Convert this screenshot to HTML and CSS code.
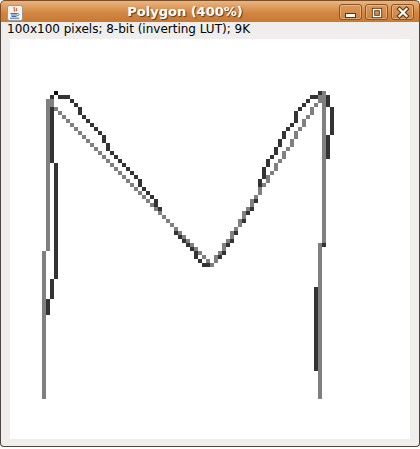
FILE: index.html
```html
<!DOCTYPE html>
<html>
<head>
<meta charset="utf-8">
<title>Polygon (400%)</title>
<link rel="stylesheet" href="styles.css">
</head>
<body>
<div class="window">
  <div class="titlebar">
    <div class="app-icon">
      <svg width="16" height="16" viewBox="0 0 16 16">
        <rect x="0.5" y="0.5" width="15" height="15" rx="2" fill="#f4f2ef" stroke="#a0968a"/>
        <path d="M7.5 2 C5.5 3.8 9 4.6 7 6.6 M9.6 3.2 C8.6 4.2 10.2 4.8 9.2 6" stroke="#e0561c" stroke-width="1.1" fill="none"/>
        <path d="M3.5 8.5 H10.5 M4 10 H10 M4.5 11.5 H9.5 M3 13.2 H12" stroke="#3f6fae" stroke-width="1"/>
        <path d="M10.5 8.6 C12.6 8.6 12.6 10.6 10.2 10.6" stroke="#3f6fae" stroke-width="0.9" fill="none"/>
      </svg>
    </div>
    <div class="title">Polygon (400%)</div>
    <div class="buttons">
      <div class="btn">
        <svg width="21" height="14" viewBox="0 0 21 14">
          <rect x="5.5" y="8.5" width="10" height="4" fill="#fff" stroke="#5a3413"/>
        </svg>
      </div>
      <div class="btn">
        <svg width="21" height="14" viewBox="0 0 21 14">
          <rect x="7.5" y="4.5" width="7" height="7" fill="none" stroke="#5a3413" stroke-width="3.2"/>
          <rect x="7.5" y="4.5" width="7" height="7" fill="none" stroke="#fff" stroke-width="1.4"/>
        </svg>
      </div>
      <div class="btn">
        <svg width="21" height="14" viewBox="0 0 21 14">
          <path d="M7.5 4 L14.5 11 M14.5 4 L7.5 11" stroke="#5a3413" stroke-width="4.2" stroke-linecap="square"/>
          <path d="M7.5 4 L14.5 11 M14.5 4 L7.5 11" stroke="#fff" stroke-width="2.2" stroke-linecap="square"/>
        </svg>
      </div>
    </div>
  </div>
  <div class="content">
    <div class="info">100x100 pixels; 8-bit (inverting LUT); 9K</div>
    <canvas id="img" class="image" width="400" height="400"></canvas>
  </div>
</div>
<script src="script.js"></script>
</body>
</html>
```

FILE: styles.css
```css
html, body {
  margin: 0;
  padding: 0;
  background: #ffffff;
}

.window {
  width: 420px;
  height: 447px;
  box-sizing: border-box;
  display: flex;
  flex-direction: column;
}

.titlebar {
  height: 22px;
  box-sizing: border-box;
  display: flex;
  align-items: flex-start;
  border: 1px solid #7c4e24;
  border-bottom: none;
  border-radius: 5px 5px 0 0;
  background: linear-gradient(to bottom, #e9b584 0%, #dc9757 35%, #d0853f 60%, #c77a36 100%);
  padding: 0 5px 0 6px;
}

.app-icon {
  width: 16px;
  height: 16px;
  margin-top: 4px;
}

.app-icon svg {
  display: block;
}

.title {
  flex: 1;
  text-align: center;
  font-family: "DejaVu Sans", sans-serif;
  font-weight: bold;
  font-size: 13px;
  line-height: 21px;
  color: #ffffff;
  text-shadow: 1px 1px 1px #5e3a16;
  padding-left: 8px;
  white-space: nowrap;
}

.buttons {
  display: flex;
  gap: 3px;
  margin-top: 3px;
}

.btn {
  width: 23px;
  height: 16px;
  box-sizing: border-box;
  border: 1px solid #8a5527;
  border-radius: 3px;
  background: linear-gradient(to bottom, #dc9a5c, #cc813e);
  box-shadow: inset 0 0 0 1px rgba(255, 214, 170, 0.45);
}

.btn svg {
  display: block;
}

.content {
  flex: 1;
  box-sizing: border-box;
  background: #efeeec;
  border: 1px solid #4d463f;
  border-top: none;
  border-radius: 0 0 4px 4px;
  padding: 0 0 7px 0;
}

.info {
  height: 17px;
  padding-left: 6px;
  font-family: "DejaVu Sans", sans-serif;
  font-size: 12px;
  line-height: 14px;
  color: #000000;
  white-space: nowrap;
}

.image {
  display: block;
  margin: 0 9px;
  width: 400px;
  height: 400px;
  background: #ffffff;
}
```

FILE: script.js
```js
(function () {
  var c = document.getElementById('img');
  var ctx = c.getContext('2d');
  var GRAY = '#808080';
  var DARK = '#333333';
  var BLACK = '#0e0e0e';

  ctx.fillStyle = '#ffffff';
  ctx.fillRect(0, 0, 400, 400);

  function px(i, j, col) {
    ctx.fillStyle = col;
    ctx.fillRect(i * 4, j * 4, 4, 4);
  }
  function vrun(i, j0, j1, col) {
    for (var j = j0; j <= j1; j++) px(i, j, col);
  }
  function line(x0, y0, x1, y1, col) {
    var dx = x1 - x0, dy = y1 - y0;
    var n = Math.max(Math.abs(dx), Math.abs(dy));
    for (var k = 0; k <= n; k++) {
      px(Math.round(x0 + dx * k / n), Math.round(y0 + dy * k / n), col);
    }
  }

  /* dark hand-drawn trace */
  vrun(10, 17, 30, DARK);
  vrun(11, 31, 59, DARK);
  vrun(10, 60, 64, DARK);
  vrun(9, 65, 68, DARK);

  var left = [
    [10,14],[12,14],[13,14],[14,14],[15,15],[16,16],[17,17],[17,18],[18,19],
    [19,20],[20,21],[21,22],[22,23],[23,24],[23,25],[24,26],[24,27],[25,28],
    [26,29],[27,30],[28,31],[29,32],[30,33],[31,34],[32,35],[32,36],[33,37],
    [34,38],[35,39],[36,40],[36,41],[37,42],[41,48],[42,49],[43,50],[44,51],
    [45,52],[46,53],[46,54],[47,55],[48,56],[49,56]
  ];
  left.forEach(function (p) { px(p[0], p[1], DARK); });
  px(11, 13, BLACK);

  line(52, 54, 62, 38, DARK);
  var right = [
    [62,35],[62,36],[63,32],[63,33],[63,34],[64,30],[64,31],[65,29],[66,27],
    [66,28],[67,25],[67,26],[68,23],[68,24],[69,22],[70,21],[71,18],[71,19],
    [71,20],[72,17],[73,16],[74,15],[75,14],[76,14],[77,13]
  ];
  right.forEach(function (p) { px(p[0], p[1], DARK); });
  vrun(79, 14, 16, DARK);
  vrun(80, 17, 23, DARK);
  vrun(79, 24, 29, DARK);
  vrun(78, 30, 51, DARK);
  vrun(77, 52, 61, DARK);
  vrun(76, 62, 82, DARK);

  /* gray polygon */
  vrun(9, 15, 52, GRAY);
  vrun(8, 53, 89, GRAY);
  px(10, 15, GRAY);
  line(9, 15, 50, 56, GRAY);
  line(50, 56, 78, 13, GRAY);
  vrun(78, 13, 50, GRAY);
  vrun(77, 51, 89, GRAY);
})();
```
